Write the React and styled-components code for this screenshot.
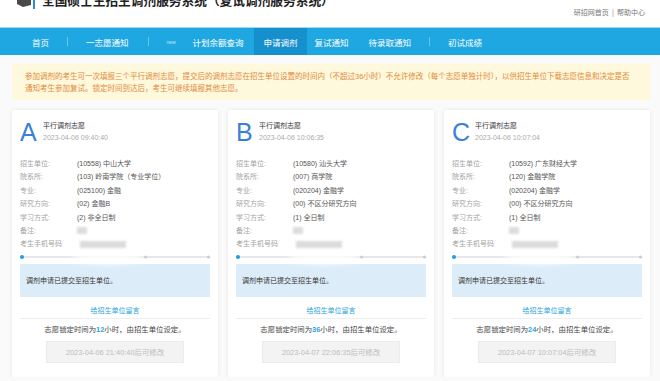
import React from "react";
import styled, { createGlobalStyle } from "styled-components";

const Global = createGlobalStyle`
  html, body { margin: 0; padding: 0; background: #fafafa; }
  body { font-family: "Liberation Sans", "Noto Sans CJK SC", sans-serif; }
  #root { width: 660px; }
`;

const Header = styled.header`
  height: 27px;
  background: #fff;
  display: flex;
  justify-content: space-between;
  align-items: flex-start;
  padding: 0 15px 0 17px;
  overflow: hidden;
`;

const Brand = styled.div`
  display: flex;
  align-items: flex-start;
  gap: 5px;
  margin-top: -9px;
`;

const Title = styled.h1`
  margin: 0;
  font-size: 12.7px;
  line-height: 18px;
  font-weight: bold;
  color: #222;
  font-family: "Noto Sans CJK SC", sans-serif;
`;

const TopLinks = styled.div`
  margin-top: 7px;
  font-size: 7px;
  line-height: 10px;
  color: #777;
  font-family: "Noto Sans CJK SC", sans-serif;
`;

const Nav = styled.nav`
  height: 27px;
  border-top: 1px solid #9fdaf5;
  background: #1fa7e2;
  display: flex;
  align-items: stretch;
  padding-left: 12px;
`;

const NavItem = styled.div`
  display: flex;
  align-items: center;
  color: #fff;
  font-size: 8.5px;
  font-family: "Noto Sans CJK SC", sans-serif;
  padding: 0 ${(p) => p.$pr}px 0 ${(p) => p.$pl}px;
  background: ${(p) => (p.$active ? "#1690cc" : "transparent")};
`;

const NavSep = styled.span`
  width: 1px;
  height: 9px;
  align-self: center;
  background: rgba(255, 255, 255, 0.35);
`;

const NewTag = styled.span`
  display: inline-block;
  width: 11px;
  margin-right: 15px;
  font-size: 5px;
  color: rgba(255, 255, 255, 0.75);
  font-family: "Liberation Sans", sans-serif;
`;

const Main = styled.main`
  padding: 9px 10px 0 12px;
`;

const Notice = styled.div`
  background: #fef8dc;
  color: #e28a3a;
  font-size: 7.5px;
  line-height: 12px;
  padding: 7px 13px 5px;
  white-space: nowrap;
`;

const Cards = styled.div`
  margin-top: 10px;
  display: grid;
  grid-template-columns: repeat(3, 1fr);
  gap: 10px;
`;

const Card = styled.section`
  background: #fff;
  box-shadow: 0 0 4px rgba(0, 0, 0, 0.08);
  border-radius: 2px;
  padding: 8px 8px 14px;
`;

const CardHead = styled.div`
  display: flex;
  align-items: center;
  gap: 5px;
`;

const Letter = styled.div`
  width: 18px;
  font-size: 25px;
  line-height: 28px;
  color: #3b7fd8;
  font-family: "Liberation Sans", sans-serif;
`;

const HeadText = styled.div`
  font-size: 7px;
  line-height: 12px;
`;

const HeadTitle = styled.div`
  color: #333;
`;

const HeadDate = styled.div`
  color: #aaa;
`;

const Rows = styled.div`
  margin-top: 11px;
`;

const Row = styled.div`
  display: flex;
  align-items: center;
  font-size: 7px;
  line-height: 13.4px;
  height: 13.4px;
`;

const Label = styled.span`
  width: 57px;
  flex: none;
  color: #a3a3a3;
`;

const Value = styled.span`
  color: #555;
  white-space: nowrap;
`;

const Blur = styled.span`
  display: inline-block;
  width: ${(p) => p.$w}px;
  height: 7px;
  margin-left: ${(p) => p.$ml || 0}px;
  background: #dcdcdc;
  filter: blur(1px);
`;

const ProgressSvg = styled.svg`
  display: block;
  overflow: visible;
`;

const InfoBox = styled.div`
  margin-top: 1px;
  height: 33px;
  background: #dcedf9;
  display: flex;
  align-items: center;
  padding: 0 6px;
  font-size: 7px;
  color: #333;
`;

const LinkRow = styled.div`
  margin-top: 8px;
  text-align: center;
  font-size: 7px;
  line-height: 12px;
  color: #2ba4dc;
  padding-bottom: 1px;
  border-bottom: 1px solid #eee;
`;

const LockText = styled.div`
  margin-top: 5px;
  text-align: center;
  font-size: 7.4px;
  line-height: 12px;
  color: #444;
  white-space: nowrap;
`;

const Hours = styled.b`
  color: #2ba4dc;
`;

const EditButton = styled.div`
  margin: 5px auto 0;
  width: 138px;
  height: 22px;
  box-sizing: border-box;
  background: #f3f3f3;
  border: 1px solid #ececec;
  color: #bbb;
  font-size: 7.4px;
  display: flex;
  align-items: center;
  justify-content: center;
  white-space: nowrap;
`;

const LogoSvg = styled.svg`
  display: block;
  flex: none;
  margin-top: 2px;
`;

const Logo = () => (
  <LogoSvg width="20" height="16" viewBox="0 0 20 16">
    <path d="M0 4 L8 0 L14 3 L14 12 L6 14 L0 11 Z" fill="#4a4a4a" />
    <rect x="16" y="1" width="2" height="15" fill="#2a8fd8" />
  </LogoSvg>
);

const Progress = () => (
  <ProgressSvg width="190" height="12" viewBox="0 0 190 12">
    <defs>
      <filter id="pblur" x="-50%" y="-100%" width="200%" height="300%">
        <feGaussianBlur stdDeviation="2.5" />
      </filter>
    </defs>
    <line x1="1" y1="6" x2="189" y2="6" stroke="#cfcfcf" strokeWidth="1" />
    <circle cx="2" cy="6" r="2" fill="#1f9ddc" />
    <circle cx="125.5" cy="6" r="1.5" fill="#c8c8c8" />
    <circle cx="188.5" cy="6" r="1.5" fill="#c8c8c8" />
    <ellipse cx="88" cy="8" rx="36" ry="5" fill="#fff" filter="url(#pblur)" />
  </ProgressSvg>
);

const cards = [
  {
    letter: "A",
    date: "2023-04-06 09:40:40",
    unit: "(10558) 中山大学",
    dept: "(103) 岭南学院（专业学位）",
    major: "(025100) 金融",
    dir: "(02) 金融B",
    mode: "(2) 非全日制",
    hours: "12",
    until: "2023-04-06 21:40:40后可修改",
  },
  {
    letter: "B",
    date: "2023-04-06 10:06:35",
    unit: "(10580) 汕头大学",
    dept: "(007) 商学院",
    major: "(020204) 金融学",
    dir: "(00) 不区分研究方向",
    mode: "(1) 全日制",
    hours: "36",
    until: "2023-04-07 22:06:35后可修改",
  },
  {
    letter: "C",
    date: "2023-04-06 10:07:04",
    unit: "(10592) 广东财经大学",
    dept: "(120) 金融学院",
    major: "(020204) 金融学",
    dir: "(00) 不区分研究方向",
    mode: "(1) 全日制",
    hours: "24",
    until: "2023-04-07 10:07:04后可修改",
  },
];

const ChoiceCard = ({ c }) => (
  <Card>
    <CardHead>
      <Letter>{c.letter}</Letter>
      <HeadText>
        <HeadTitle>平行调剂志愿</HeadTitle>
        <HeadDate>{c.date}</HeadDate>
      </HeadText>
    </CardHead>
    <Rows>
      <Row><Label>招生单位:</Label><Value>{c.unit}</Value></Row>
      <Row><Label>院系所:</Label><Value>{c.dept}</Value></Row>
      <Row><Label>专业:</Label><Value>{c.major}</Value></Row>
      <Row><Label>研究方向:</Label><Value>{c.dir}</Value></Row>
      <Row><Label>学习方式:</Label><Value>{c.mode}</Value></Row>
      <Row><Label>备注:</Label><Blur $w={10} /></Row>
      <Row><Label>考生手机号码</Label><Blur $w={46} $ml={3} /></Row>
    </Rows>
    <Progress />
    <InfoBox>调剂申请已提交至招生单位。</InfoBox>
    <LinkRow>给招生单位留言</LinkRow>
    <LockText>
      志愿锁定时间为<Hours>{c.hours}</Hours>小时，由招生单位设定。
    </LockText>
    <EditButton>{c.until}</EditButton>
  </Card>
);

export default function App() {
  return (
    <>
      <Global />
      <Header>
        <Brand>
          <Logo />
          <Title>全国硕士生招生调剂服务系统（复试调剂服务系统）</Title>
        </Brand>
        <TopLinks>研招网首页 &nbsp;|&nbsp; 帮助中心</TopLinks>
      </Header>
      <Nav>
        <NavItem $pl={20} $pr={18}>首页</NavItem>
        <NavSep />
        <NavItem $pl={18} $pr={19}>一志愿通知</NavItem>
        <NavSep />
        <NavItem $pl={18} $pr={10}>
          <NewTag>new</NewTag>计划余额查询
        </NavItem>
        <NavItem $pl={10} $pr={9} $active>申请调剂</NavItem>
        <NavItem $pl={8} $pr={10}>复试通知</NavItem>
        <NavItem $pl={10} $pr={18}>待录取通知</NavItem>
        <NavSep />
        <NavItem $pl={18} $pr={18}>初试成绩</NavItem>
      </Nav>
      <Main>
        <Notice>
          参加调剂的考生可一次填报三个平行调剂志愿，提交后的调剂志愿在招生单位设置的时间内（不超过36小时）不允许修改（每个志愿单独计时），以供招生单位下载志愿信息和决定是否
          <br />
          通知考生参加复试。锁定时间到达后，考生可继续填报其他志愿。
        </Notice>
        <Cards>
          {cards.map((c) => (
            <ChoiceCard key={c.letter} c={c} />
          ))}
        </Cards>
      </Main>
    </>
  );
}
